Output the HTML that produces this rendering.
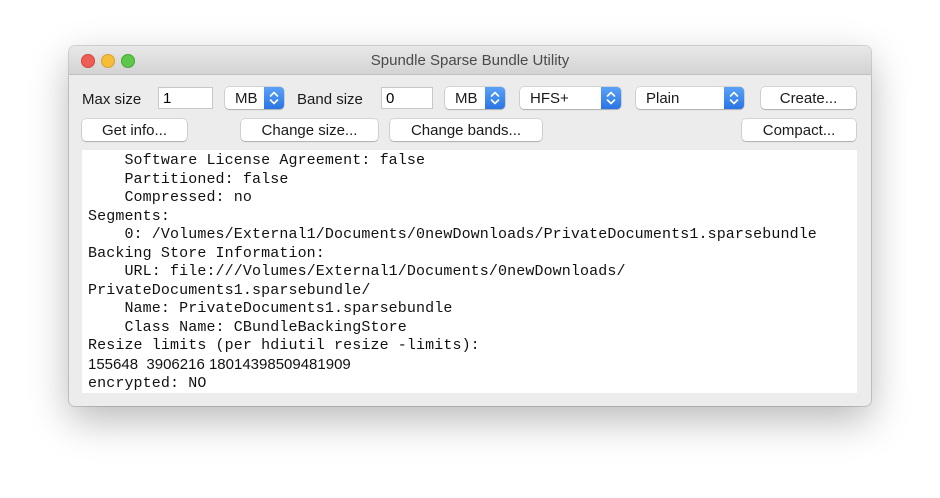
<!DOCTYPE html>
<html><head><style>
body{margin:0;width:940px;height:498px;background:#fff;position:relative;font-family:"Liberation Sans",sans-serif;overflow:hidden}
.win{position:absolute;left:69px;top:46px;width:802px;height:360px;background:#ececec;border-radius:6px;box-shadow:0 14px 40px rgba(0,0,0,.28),0 0 0 1px rgba(0,0,0,.15)}
.tb{position:absolute;left:0;top:0;width:100%;height:28px;background:linear-gradient(#e8e8e8,#d3d3d3);border-bottom:1px solid #c0c0c0;border-radius:6px 6px 0 0;text-align:center;line-height:30px;font-size:15px;color:#4a4a4a}
.d{position:absolute;top:8px;width:12px;height:12px;border-radius:50%}
.a{position:absolute;font-size:15px;color:#1a1a1a}
.in{position:absolute;background:#fff;border:1px solid #c8c8c8;height:22px;font-size:15px;line-height:22px;padding-left:4px;box-sizing:border-box}
.btn{position:absolute;background:#fff;border-radius:4px;box-shadow:0 0 0 .5px rgba(0,0,0,.2),0 1px 1px rgba(0,0,0,.18);height:22px;font-size:15px;line-height:24px;text-align:center;color:#1a1a1a}
.pop{text-align:left;padding-left:10px;box-sizing:border-box}
.ar{position:absolute;right:0;top:0;width:20px;height:22px;background:linear-gradient(#5aa2f7,#2a74e6);border-radius:0 4px 4px 0}
.txt{position:absolute;left:13px;top:104px;width:775px;height:243px;background:#fff;font-family:"Liberation Mono",monospace;font-size:15px;letter-spacing:.11px;line-height:18.5px;white-space:pre;color:#111;padding:2px 0 0 6px;box-sizing:border-box}
</style></head><body>
<div class="win">
<div class="tb">Spundle Sparse Bundle Utility
<div class="d" style="left:12px;background:#ee5e56;border:.5px solid #d1443d"></div>
<div class="d" style="left:32px;background:#f6bd3b;border:.5px solid #d9a026"></div>
<div class="d" style="left:52px;background:#5fc84b;border:.5px solid #44a934"></div>
</div>
<svg width="0" height="0" style="position:absolute"><defs><symbol id="c" viewBox="0 0 20 22"><path d="M6.5 9 L10 5.5 L13.5 9 M6.5 13 L10 16.5 L13.5 13" stroke="#fff" stroke-width="1.6" fill="none" stroke-linecap="round" stroke-linejoin="round"/></symbol></defs></svg>
<div class="a" style="left:13px;top:45px">Max size</div>
<div class="in" style="left:89px;top:41px;width:55px">1</div>
<div class="btn pop" style="left:156px;top:41px;width:59px">MB<div class="ar"><svg width="20" height="22"><use href="#c"/></svg></div></div>
<div class="a" style="left:228px;top:45px">Band size</div>
<div class="in" style="left:312px;top:41px;width:52px">0</div>
<div class="btn pop" style="left:376px;top:41px;width:60px">MB<div class="ar"><svg width="20" height="22"><use href="#c"/></svg></div></div>
<div class="btn pop" style="left:451px;top:41px;width:101px">HFS+<div class="ar"><svg width="20" height="22"><use href="#c"/></svg></div></div>
<div class="btn pop" style="left:567px;top:41px;width:108px">Plain<div class="ar"><svg width="20" height="22"><use href="#c"/></svg></div></div>
<div class="btn" style="left:692px;top:41px;width:95px">Create...</div>
<div class="btn" style="left:13px;top:73px;width:105px">Get info...</div>
<div class="btn" style="left:172px;top:73px;width:137px">Change size...</div>
<div class="btn" style="left:321px;top:73px;width:152px">Change bands...</div>
<div class="btn" style="left:673px;top:73px;width:114px">Compact...</div>
<div class="txt">    Software License Agreement: false
    Partitioned: false
    Compressed: no
Segments:
    0: /Volumes/External1/Documents/0newDownloads/PrivateDocuments1.sparsebundle
Backing Store Information:
    URL: file:///Volumes/External1/Documents/0newDownloads/
PrivateDocuments1.sparsebundle/
    Name: PrivateDocuments1.sparsebundle
    Class Name: CBundleBackingStore
Resize limits (per hdiutil resize -limits):
<span style="font-family:'Liberation Sans',sans-serif;letter-spacing:0">155648  3906216 18014398509481909</span>
encrypted: NO</div>
</div>
</body></html>
